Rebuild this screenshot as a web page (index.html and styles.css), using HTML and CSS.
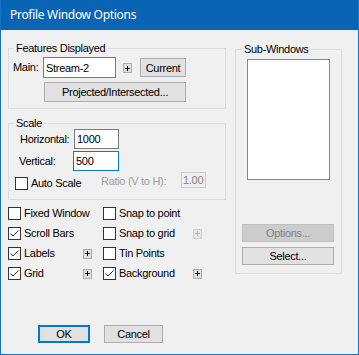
FILE: index.html
```html
<!DOCTYPE html>
<html lang="en">

<head>
    <meta charset="UTF-8">
    <meta name="viewport" content="width=device-width, initial-scale=1.0">
    <title>Profile Window Options</title>
    <link rel="stylesheet" href="styles.css">
</head>

<body>
    <div class="ventana">
        <div class="barra-titulo">Profile Window Options</div>

        <div class="cliente">
            <div class="columnas">
                <div class="col-izq">
                    <!-- Features Displayed -->
                    <fieldset class="grupo grupo-features">
                        <legend>Features Displayed</legend>
                        <div class="fila-main">
                            <label class="lbl-main">Main:</label>
                            <input class="campo campo-main" type="text" value="Stream-2">
                            <span class="mas mas-main">
                                <svg width="5" height="5" viewBox="0 0 5 5"><path d="M0 2.5H5M2.5 0V5" stroke="#000" /></svg>
                            </span>
                            <button class="boton btn-current">Current</button>
                        </div>
                        <button class="boton btn-proyectado">Projected/Intersected...</button>
                    </fieldset>

                    <!-- Scale -->
                    <fieldset class="grupo grupo-escala">
                        <legend>Scale</legend>
                        <div class="fila-escala fila-horizontal">
                            <label class="lbl-escala">Horizontal:</label>
                            <input class="campo campo-escala" type="text" value="1000">
                        </div>
                        <div class="fila-escala fila-vertical">
                            <label class="lbl-escala">Vertical:</label>
                            <input class="campo campo-escala campo-foco" type="text" value="500">
                        </div>
                        <div class="fila-auto">
                            <div class="auto-scale">
                                <span class="casilla"></span>
                                <span class="texto-casilla">Auto Scale</span>
                            </div>
                            <span class="lbl-ratio">Ratio (V to H):</span>
                            <input class="campo campo-ratio" type="text" value="1.00" disabled>
                        </div>
                    </fieldset>

                    <!-- Opciones -->
                    <div class="opciones">
                        <div class="opcion"><span class="casilla"></span><span class="texto-casilla">Fixed Window</span></div>
                        <div></div>
                        <div class="opcion"><span class="casilla"></span><span class="texto-casilla">Snap to point</span></div>
                        <div></div>

                        <div class="opcion"><span class="casilla marcada"><svg width="11" height="11" viewBox="0 0 11 11"><path d="M1.5 5.5L4 8L9.5 2.5" fill="none" stroke="#333" /></svg></span><span class="texto-casilla">Scroll Bars</span></div>
                        <div></div>
                        <div class="opcion"><span class="casilla"></span><span class="texto-casilla">Snap to grid</span></div>
                        <div class="celda-mas"><span class="mas mas-off"><svg width="5" height="5" viewBox="0 0 5 5"><path d="M0 2.5H5M2.5 0V5" stroke="#b4b4b4" /></svg></span></div>

                        <div class="opcion"><span class="casilla marcada"><svg width="11" height="11" viewBox="0 0 11 11"><path d="M1.5 5.5L4 8L9.5 2.5" fill="none" stroke="#333" /></svg></span><span class="texto-casilla">Labels</span></div>
                        <div class="celda-mas"><span class="mas"><svg width="5" height="5" viewBox="0 0 5 5"><path d="M0 2.5H5M2.5 0V5" stroke="#000" /></svg></span></div>
                        <div class="opcion"><span class="casilla"></span><span class="texto-casilla">Tin Points</span></div>
                        <div></div>

                        <div class="opcion"><span class="casilla marcada"><svg width="11" height="11" viewBox="0 0 11 11"><path d="M1.5 5.5L4 8L9.5 2.5" fill="none" stroke="#333" /></svg></span><span class="texto-casilla">Grid</span></div>
                        <div class="celda-mas"><span class="mas"><svg width="5" height="5" viewBox="0 0 5 5"><path d="M0 2.5H5M2.5 0V5" stroke="#000" /></svg></span></div>
                        <div class="opcion"><span class="casilla marcada"><svg width="11" height="11" viewBox="0 0 11 11"><path d="M1.5 5.5L4 8L9.5 2.5" fill="none" stroke="#333" /></svg></span><span class="texto-casilla">Background</span></div>
                        <div class="celda-mas"><span class="mas"><svg width="5" height="5" viewBox="0 0 5 5"><path d="M0 2.5H5M2.5 0V5" stroke="#000" /></svg></span></div>
                    </div>
                </div>

                <div class="col-der">
                    <!-- Sub-Windows -->
                    <fieldset class="grupo grupo-sub">
                        <legend>Sub-Windows</legend>
                        <div class="lista"></div>
                        <button class="boton boton-off btn-options" disabled>Options...</button>
                        <button class="boton btn-select">Select...</button>
                    </fieldset>
                </div>
            </div>

            <div class="pie">
                <button class="boton btn-ok">OK</button>
                <button class="boton btn-cancel">Cancel</button>
            </div>
        </div>
    </div>
</body>

</html>
```

FILE: styles.css
```css
body {
    margin: 0;
    font-family: "Liberation Sans", Arial, sans-serif;
    font-size: 11px;
    letter-spacing: -0.3px;
    color: #000;
    background-color: #f0f0f0;
}

.ventana {
    width: 359px;
    height: 355px;
    box-sizing: border-box;
    border: 1px solid #1a72c8;
    border-top: none;
    background-color: #f0f0f0;
    display: flex;
    flex-direction: column;
}

.barra-titulo {
    height: 30px;
    line-height: 30px;
    padding-left: 9px;
    background-color: #0a64b4;
    color: #fff;
    font-family: "Noto Sans", sans-serif;
    font-size: 12px;
    letter-spacing: -0.3px;
}

.cliente {
    flex: 1;
    display: flex;
    flex-direction: column;
    padding: 0 0 11px 7px;
}

.columnas {
    display: flex;
}

.col-izq {
    width: 218px;
    padding-top: 12px;
}

.col-der {
    width: 107px;
    margin-left: 9px;
    padding-top: 13px;
}

/* group boxes */
.grupo {
    margin: 0;
    padding: 0;
    border: 1px solid #dcdcdc;
    min-width: 0;
}

.grupo legend {
    margin-left: 5px;
    padding: 0 2px 1px 2px;
    line-height: 12px;
}

.grupo-sub legend {
    margin-left: 6px;
}

.grupo-features {
    padding-bottom: 6px;
}

.grupo-escala {
    margin-top: 8px;
    padding-bottom: 9px;
}

.grupo-sub {
    padding-bottom: 8px;
}

/* controles */
.campo {
    box-sizing: border-box;
    font: inherit;
    letter-spacing: inherit;
    color: #000;
    background-color: #fff;
    border: 1px solid #7a7a7a;
    padding: 0 2px;
    margin: 0;
    outline: none;
}

.campo-foco {
    border-color: #0078d7;
}

.boton {
    box-sizing: border-box;
    font: inherit;
    letter-spacing: inherit;
    color: #000;
    background-color: #e1e1e1;
    border: 1px solid #adadad;
    padding: 0;
    margin: 0;
}

.boton-off {
    background-color: #cccccc;
    border-color: #bfbfbf;
    color: #838383;
}

.mas {
    box-sizing: border-box;
    display: flex;
    align-items: center;
    justify-content: center;
    width: 9px;
    height: 10px;
    background-color: #e1e1e1;
    border: 1px solid #adadad;
}

.mas-off {
    background-color: #e6e6e6;
    border-color: #d0d0d0;
}

.casilla {
    box-sizing: border-box;
    display: flex;
    align-items: center;
    justify-content: center;
    width: 13px;
    height: 13px;
    flex-shrink: 0;
    background-color: #fff;
    border: 1px solid #333;
}

.texto-casilla {
    margin-left: 3px;
    line-height: 13px;
    white-space: nowrap;
}

/* Features Displayed */
.fila-main {
    display: flex;
    align-items: flex-start;
    margin-top: 2px;
}

.lbl-main {
    box-sizing: border-box;
    width: 34px;
    padding-left: 4px;
    line-height: 21px;
}

.campo-main {
    width: 73px;
    height: 21px;
}

.mas-main {
    margin-left: 7px;
    margin-top: 6px;
}

.btn-current {
    width: 46px;
    height: 19px;
    margin-left: 8px;
    margin-top: 1px;
}

.btn-proyectado {
    display: block;
    width: 142px;
    height: 20px;
    margin: 4px 0 0 35px;
}

/* Scale */
.fila-escala {
    display: flex;
    align-items: center;
}

.fila-horizontal {
    margin-top: -1px;
}

.fila-vertical {
    margin-top: 2px;
}

.lbl-escala {
    box-sizing: border-box;
    width: 65px;
    padding-left: 11px;
}

.fila-vertical .lbl-escala {
    width: 64px;
    padding-left: 10px;
}

.campo-escala {
    width: 45px;
    height: 20px;
}

.fila-vertical .campo-escala {
    width: 46px;
}

.fila-auto {
    display: flex;
    align-items: flex-start;
    margin-top: 1px;
}

.auto-scale {
    box-sizing: border-box;
    display: flex;
    width: 92px;
    padding-left: 6px;
    margin-top: 5px;
}

.lbl-ratio {
    width: 80px;
    margin-top: 3px;
    line-height: 13px;
    color: #a0a0a0;
}

.campo-ratio {
    width: 25px;
    height: 16px;
    padding: 0 1px;
    border-color: #cccccc;
    background-color: #f0f0f0;
    color: #838383;
}

/* opciones */
.opciones {
    display: grid;
    grid-template-columns: 75px 20px 90px 9px;
    grid-auto-rows: 13px;
    row-gap: 7px;
    margin-top: 7px;
}

.opcion {
    display: flex;
    align-items: center;
}

.celda-mas {
    display: flex;
    align-items: center;
}

/* Sub-Windows */
.lista {
    width: 83px;
    height: 121px;
    box-sizing: border-box;
    margin: 3px 0 0 11px;
    background-color: #fff;
    border: 1px solid #828790;
}

.btn-options,
.btn-select {
    display: block;
    width: 92px;
    height: 18px;
    margin-left: 6px;
}

.btn-options {
    margin-top: 44px;
}

.btn-select {
    margin-top: 5px;
}

/* pie */
.pie {
    margin-top: auto;
    display: flex;
    padding-left: 30px;
}

.btn-ok {
    width: 52px;
    height: 18px;
    border: 2px solid #0078d7;
}

.btn-cancel {
    width: 59px;
    height: 18px;
    margin-left: 14px;
}
```
